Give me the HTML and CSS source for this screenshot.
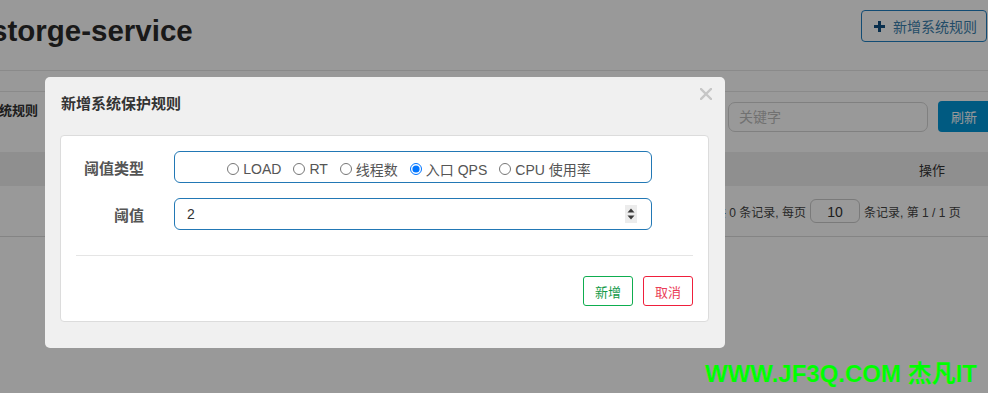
FILE: index.html
```html
<!DOCTYPE html>
<html lang="zh-CN">
<head>
<meta charset="utf-8">
<title>系统规则</title>
<link rel="stylesheet" href="styles.css">
</head>
<body>
<div class="page">
  <header class="page-header">
    <h1 class="app-title">storge-service</h1>
    <button class="btn-outline-primary" type="button">
      <svg class="plus" width="11" height="11" viewBox="0 0 11 11"><path d="M4 0h3v4h4v3H7v4H4V7H0V4h4z" fill="currentColor"/></svg>
      新增系统规则
    </button>
  </header>
  <div class="subnav"></div>
  <div class="toolbar">
    <span class="toolbar-title">系统规则</span>
    <div class="toolbar-right">
      <div class="search-input">关键字</div>
      <button class="btn-primary" type="button">刷新</button>
    </div>
  </div>
  <div class="table-head">
    <span class="col-op">操作</span>
  </div>
  <div class="pager">
    <span>共 0 条记录, 每页</span>
    <span class="page-size">10</span>
    <span>条记录, 第 1 / 1 页</span>
  </div>
</div>

<div class="backdrop"></div>

<div class="modal">
  <div class="modal-header">
    <span class="modal-title">新增系统保护规则</span>
    <svg class="close" width="12" height="12" viewBox="0 0 12 12"><path d="M1 1L11 11M11 1L1 11" stroke="#c6c6c6" stroke-width="2.4" stroke-linecap="square"/></svg>
  </div>
  <div class="panel">
    <div class="form-row">
      <label class="form-label">阈值类型</label>
      <div class="form-box radio-box">
        <label class="radio"><input type="radio" name="t">LOAD</label>
        <label class="radio"><input type="radio" name="t">RT</label>
        <label class="radio"><input type="radio" name="t">线程数</label>
        <label class="radio"><input type="radio" name="t" checked>入口 QPS</label>
        <label class="radio"><input type="radio" name="t">CPU 使用率</label>
      </div>
    </div>
    <div class="form-row">
      <label class="form-label">阈值</label>
      <div class="form-box number-box">
        <span class="value">2</span>
        <svg class="spinner" width="12" height="18" viewBox="0 0 12 18"><rect width="12" height="18" fill="#ececec"/><path d="M2.5 7.5L6 3.5L9.5 7.5Z M2.5 10.5L6 14.5L9.5 10.5Z" fill="#3a3a3a"/></svg>
      </div>
    </div>
    <div class="divider"></div>
    <div class="actions">
      <button class="btn btn-green" type="button">新增</button>
      <button class="btn btn-red" type="button">取消</button>
    </div>
  </div>
</div>

<div class="watermark">WWW.JF3Q.COM 杰凡IT</div>
</body>
</html>
```
FILE: styles.css
```css
* { box-sizing: border-box; }
html, body { margin: 0; padding: 0; }
body {
  width: 988px;
  height: 393px;
  overflow: hidden;
  background: #fff;
  font-family: "Liberation Sans", Arial, "Noto Sans CJK SC", sans-serif;
  color: #333;
  position: relative;
}
.page { width: 988px; }
.page-header {
  height: 71px;
  border-bottom: 1px solid #e6e6e6;
  display: flex;
  justify-content: space-between;
  align-items: flex-start;
}
.app-title {
  margin: 14px 0 0 -9px;
  font-size: 29.5px;
  line-height: 34px;
  font-weight: bold;
  color: #2b2b2b;
}
.btn-outline-primary {
  margin-top: 10px;
  margin-right: 1px;
  width: 126px;
  height: 32px;
  border: 1px solid #1f7fc2;
  border-radius: 4px;
  background: #fff;
  color: #3b7fae;
  font: 14px "Liberation Sans", "Noto Sans CJK SC", sans-serif;
  display: flex;
  align-items: center;
  padding: 0 0 0 12px;
  gap: 8px;
}
.plus { color: #104f80; }
.subnav {
  height: 21px;
  border-bottom: 1px solid #e6e6e6;
}
.toolbar {
  height: 60px;
  display: flex;
  justify-content: space-between;
  align-items: flex-start;
}
.toolbar-title {
  margin: 11px 0 0 -14px;
  font-size: 13px;
  font-weight: bold;
  line-height: 16px;
}
.toolbar-right {
  display: flex;
  gap: 10px;
  margin-top: 9px;
}
.search-input {
  width: 200px;
  height: 30px;
  border: 1px solid #d6d6d6;
  border-radius: 7px;
  padding: 0 10px;
  font-size: 14px;
  line-height: 28px;
  color: #bdbdbd;
  margin-top: 1px;
  margin-left: 1px;
}
.btn-primary {
  width: 50px;
  height: 31px;
  border: 0;
  border-radius: 4px 0 0 4px;
  background: #0196d8;
  color: #fff;
  font: 13px "Liberation Sans", "Noto Sans CJK SC", sans-serif;
  text-align: left;
  padding: 0 0 0 13px;
}
.table-head {
  height: 34px;
  background: #eeeeee;
  display: flex;
  justify-content: flex-end;
  align-items: center;
}
.col-op {
  font-size: 13px;
  margin-right: 43px;
  color: #333;
}
.pager {
  height: 51px;
  border-bottom: 1px solid #dcdcdc;
  display: flex;
  align-items: center;
  padding-left: 714px;
  gap: 4px;
  font-size: 12px;
  color: #444;
}
.page-size {
  width: 50px;
  height: 24px;
  border: 1px solid #ccc;
  border-radius: 6px;
  text-align: center;
  line-height: 24px;
  font-size: 14px;
  color: #333;
}
.backdrop {
  position: absolute;
  inset: 0;
  background: rgba(0, 0, 0, 0.4);
}
.modal {
  position: absolute;
  left: 45px;
  top: 77px;
  width: 680px;
  background: #f0f0f0;
  border-radius: 5px;
  padding: 16px 16px 26px 15px;
}
.modal-header {
  display: flex;
  justify-content: space-between;
  align-items: flex-start;
  height: 20px;
  margin-bottom: 22px;
  padding-left: 1px;
}
.modal-title {
  font-size: 15px;
  line-height: 20px;
  font-weight: bold;
  color: #333;
  font-family: "Noto Sans CJK SC", sans-serif;
}
.close { margin-top: -5px; margin-right: -3px; }
.panel {
  background: #fff;
  border: 1px solid #dcdcdc;
  border-radius: 4px;
  padding: 15px 0 15px;
}
.form-row {
  display: flex;
  align-items: center;
  padding-left: 21px;
  margin-bottom: 15px;
}
.form-label {
  width: 62px;
  text-align: right;
  margin-right: 30px;
  font-size: 15px;
  font-weight: bold;
  color: #555;
  font-family: "Noto Sans CJK SC", sans-serif;
}
.form-box {
  width: 478px;
  height: 32px;
  border: 1px solid #2278b5;
  border-radius: 6px;
  display: flex;
  align-items: center;
}
.radio-box {
  justify-content: center;
  gap: 12px;
  padding: 3px 8px 0 0;
  font-size: 14px;
  color: #555;
}
.radio {
  display: inline-flex;
  align-items: center;
}
.radio input {
  margin: 0 4px 0 0;
  width: 12px;
  height: 12px;
}
.number-box {
  justify-content: space-between;
  padding: 0 14px 0 12px;
  font-size: 14px;
  color: #333;
}
.divider {
  height: 1px;
  background: #e5e5e5;
  margin: 25px 15px 20px 15px;
}
.actions {
  display: flex;
  justify-content: flex-end;
  gap: 10px;
  padding-right: 15px;
}
.btn {
  width: 50px;
  height: 30px;
  background: #fff;
  border-radius: 3px;
  font: 13px "Noto Sans CJK SC", sans-serif;
  padding: 0;
}
.btn-green { border: 1px solid #0ead4f; color: #139a48; }
.btn-red { border: 1px solid #ef1f3c; color: #ea3d58; }
.watermark {
  position: absolute;
  left: 705px;
  top: 360px;
  font-size: 24px;
  line-height: 28px;
  font-weight: bold;
  color: #00ff00;
  white-space: nowrap;
  font-family: "Liberation Sans", "Noto Sans CJK SC", sans-serif;
}
```
